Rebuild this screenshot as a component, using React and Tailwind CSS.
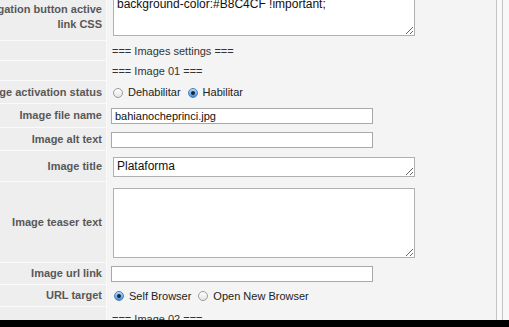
import React from "react";

const font = { fontFamily: '"Liberation Sans", Arial, sans-serif' };

function Radio({ checked }) {
  if (checked) {
    return (
      <span className="w-[10px] h-[10px] rounded-full border border-[#4f7fb0] bg-linear-to-b from-[#b9dbf8] to-[#3f8fdc] flex items-center justify-center shrink-0">
        <span className="w-[4px] h-[4px] rounded-full bg-[#16263a]" />
      </span>
    );
  }
  return (
    <span className="w-[10px] h-[10px] rounded-full border border-[#9c9c9c] bg-linear-to-b from-white to-[#e4e4e4] shrink-0" />
  );
}

function Row({ label, h, children }) {
  return (
    <div className={`flex shrink-0 ${h}`}>
      <div className="w-[107px] shrink-0 flex items-center justify-end pr-[4px] bg-[#eeeeee] border-r border-b border-[#fafafa] text-[11px] font-bold text-[#585858] whitespace-nowrap">
        {label}
      </div>
      <div className="flex-1 flex items-center min-w-0">{children}</div>
    </div>
  );
}

const inputCls =
  "ml-[4px] w-[262px] h-[16px] bg-white border border-[#a8a8a8] px-[3px] text-[11px] text-[#111] outline-none";
const areaCls =
  "ml-[6px] w-[302px] bg-white border border-[#b0b0b0] px-[3px] text-[12px] leading-[15px] text-[#111] outline-none";

export default function App() {
  return (
    <div className="w-[509px] h-[327px] overflow-hidden flex flex-col bg-[#f4f4f4]" style={font}>
      <div className="h-[320px] shrink-0 flex overflow-hidden">
        <div className="w-[496px] shrink-0 flex flex-col">
          {/* textarea row, top cut off */}
          <div className="flex shrink-0 h-[41px]">
            <div className="w-[107px] shrink-0 flex flex-col items-end pt-[2px] pr-[4px] bg-[#eeeeee] border-r border-b border-[#fafafa] text-[11px] leading-[15px] font-bold text-[#585858] whitespace-nowrap">
              <span>Navigation button active</span>
              <span>link CSS</span>
            </div>
            <div className="flex-1">
              <textarea
                className={`${areaCls} block h-[50px] mt-[-14px] pt-[10px]`}
                defaultValue="background-color:#B8C4CF !important;"
                style={font}
              />
            </div>
          </div>

          <Row label="" h="h-[20px]">
            <span className="pl-[5px] text-[11px] text-[#333]">=== Images settings ===</span>
          </Row>
          <Row label="" h="h-[20px]">
            <span className="pl-[5px] text-[11px] text-[#333]">=== Image 01 ===</span>
          </Row>
          <Row label="Image activation status" h="h-[23px]">
            <div className="pl-[6px] flex items-center gap-[5px] text-[11px] text-[#222]">
              <Radio />
              <span className="mr-[2px]">Dehabilitar</span>
              <Radio checked />
              <span>Habilitar</span>
            </div>
          </Row>
          <Row label="Image file name" h="h-[24px]">
            <input className={inputCls} defaultValue="bahianocheprinci.jpg" style={font} />
          </Row>
          <Row label="Image alt text" h="h-[23px]">
            <input className={inputCls} defaultValue="" style={font} />
          </Row>
          <Row label="Image title" h="h-[31px]">
            <textarea className={`${areaCls} h-[20px] py-[1px] block`} defaultValue="Plataforma" style={font} />
          </Row>
          <Row label="Image teaser text" h="h-[81px]">
            <textarea className={`${areaCls} h-[70px] block`} defaultValue="" style={font} />
          </Row>
          <Row label="Image url link" h="h-[22px]">
            <input className={inputCls} defaultValue="" style={font} />
          </Row>
          <Row label="URL target" h="h-[22px]">
            <div className="pl-[7px] flex items-center gap-[5px] text-[11px] text-[#222]">
              <Radio checked />
              <span className="mr-[2px]">Self Browser</span>
              <Radio />
              <span>Open New Browser</span>
            </div>
          </Row>
          <Row label="" h="h-[24px]">
            <span className="pl-[5px] text-[11px] text-[#333]">=== Image 02 ===</span>
          </Row>
        </div>
        <div className="w-px bg-[#c4c4c4]" />
        <div className="w-[5px] bg-[#f9f9f9]" />
        <div className="w-px bg-[#c4c4c4]" />
        <div className="flex-1 bg-[#f8f8f8]" />
      </div>
      <div className="h-[7px] shrink-0 bg-black" />
    </div>
  );
}
